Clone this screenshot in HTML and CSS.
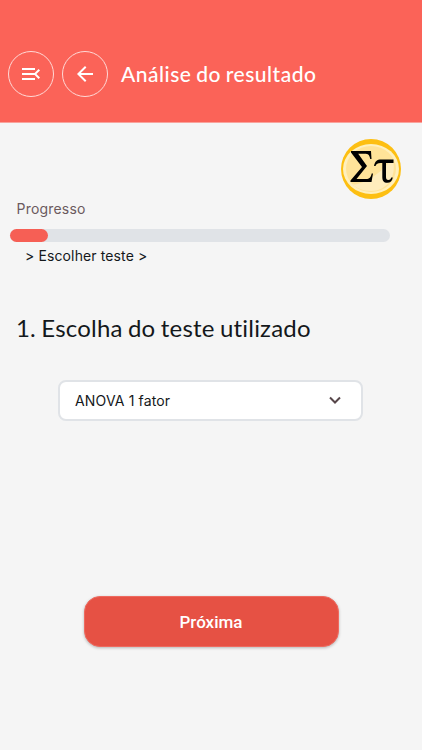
FILE: index.html
```
<!DOCTYPE html>
<html lang="pt-BR">
  <head>
    <meta charset="utf-8">
    <title>Análise do resultado</title>
    <link rel="stylesheet" href="styles.css">
  </head>
  <body>
    <header>
      <button class="round menu" aria-label="Menu">
        <svg width="24" height="24" viewBox="0 0 24 24"><path d="M3 18h13v-2H3v2zM3 6v2h13V6H3zm0 7h13v-2H3v2zM21 15.600l-3.600-3.600 3.600-3.600L19.600 7l-5 5 5 5z"/></svg>
      </button>
      <button class="round" aria-label="Voltar">
        <svg width="24" height="24" viewBox="0 0 24 24"><path d="M20 11H7.830l5.590-5.590L12 4l-8 8 8 8 1.410-1.410L7.830 13H20z"/></svg>
      </button>
      <h1>Análise do resultado</h1>
    </header>

    <main>
      <svg class="logo" width="62" height="62" viewBox="0 0 62 62">
        <circle cx="31" cy="31" r="30" fill="#fdbf12"/>
        <ellipse cx="31" cy="31" rx="28" ry="25" fill="#fff0bd"/>
        <ellipse cx="31" cy="31" rx="25" ry="23" fill="#ffe399"/>
        <path d="M12 46C20 49 44 34 52 20c6 15-3 33-21 33-8 0-15-3-19-7z" fill="#ffedbd"/>
        <path d="M11 13h20l.5 8h-1.300c-.7-4-2-5.200-5.500-5.200h-6.500L27 28 16.500 41H26c3.500 0 4.800-1.500 5.700-5.500H33L31.500 44H10.500v-1.500L22 29 11 14.500z"/>
        <path d="M34 28c1-5 3-6.500 7-6.500h12.500V25H46v14c0 2 .7 3 2.300 3 1.500 0 2.400-.8 3-2.500h1.500c-.5 3.500-2.500 5.300-5.500 5.300-3.500 0-5-2-5-5.800V25h-1.800c-3 0-4 .7-5 3z"/>
      </svg>

      <div class="label">Progresso</div>
      <div class="progress"><div class="bar" style="width: 10%;"></div></div>
      <div class="steps">&gt; Escolher teste &gt;</div>

      <h2>1. Escolha do teste utilizado</h2>

      <div class="select">
        <span>ANOVA 1 fator</span>
        <svg width="14" height="9" viewBox="0 0 14 9"><path d="M2 1.500l5 5 5-5"/></svg>
      </div>

      <button class="next">Próxima</button>
    </main>
  </body>
</html>
```

FILE: styles.css
```
* {
  box-sizing: border-box;
}
body {
  margin: 0;
  min-height: 750px;
  background: #f5f5f5;
  color: #14181b;
  font-family: Inter, sans-serif;
}
button {
  border: 0;
  padding: 0;
}
header {
  display: flex;
  align-items: center;
  height: 123px;
  padding: 25px 8px 0;
  background: #fb6358;
  border-bottom: 1px solid #f9a39c;
}
.round {
  display: flex;
  align-items: center;
  justify-content: center;
  width: 46px;
  height: 46px;
  margin-right: 8px;
  border: 1px solid #ffd9d6;
  border-radius: 50%;
  background: none;
  fill: #fff;
}
.menu {
  margin-top: 1px;
}
h1, h2 {
  margin: 0;
  font-family: Lato, sans-serif;
  white-space: nowrap;
}
h1 {
  margin-left: 5px;
  font-size: 21px;
  font-weight: 500;
  letter-spacing: 0.5px;
  word-spacing: -1px;
  line-height: 24px;
  color: #fff;
}
main {
  display: flex;
  flex-direction: column;
  align-items: flex-start;
}
.logo {
  align-self: flex-end;
  margin: 15px 20px 0 0;
}
.label {
  margin: 0 0 0 16.500px;
  font-size: 14px;
  line-height: 18px;
  letter-spacing: 0.2px;
  color: #6b5a5e;
}
.progress {
  width: 380px;
  height: 13px;
  margin: 11px 0 0 10px;
  border-radius: 7px;
  background: #e0e3e7;
}
.bar {
  height: 100%;
  border-radius: 7px;
  background: #f65f55;
}
.steps {
  margin: 5px 0 0 25px;
  font-size: 14px;
  line-height: 18px;
  letter-spacing: 0.12px;
}
h2 {
  margin: 48px 0 0 16px;
  font-size: 24px;
  font-weight: 400;
  letter-spacing: 0.2px;
  word-spacing: -1px;
  line-height: 30px;
}
.select {
  display: flex;
  align-items: center;
  justify-content: space-between;
  width: 305px;
  height: 41px;
  margin: 37px 0 0 58px;
  padding: 0 19px 0 15px;
  border: 2px solid #e0e3e7;
  border-radius: 8px;
  background: #fff;
  font-size: 14px;
  letter-spacing: 0.15px;
}
.select svg {
  fill: none;
  stroke: #57464a;
  stroke-width: 2;
}
.next {
  width: 255px;
  height: 51px;
  margin: 175px 0 0 83.500px;
  border: 1px solid #ee6a5f;
  border-radius: 16px;
  background: #e65144;
  box-shadow: 0 1px 3px rgba(0, 0, 0, 0.25);
  color: #fff;
  font: 500 17px Roboto, sans-serif;
}
```
